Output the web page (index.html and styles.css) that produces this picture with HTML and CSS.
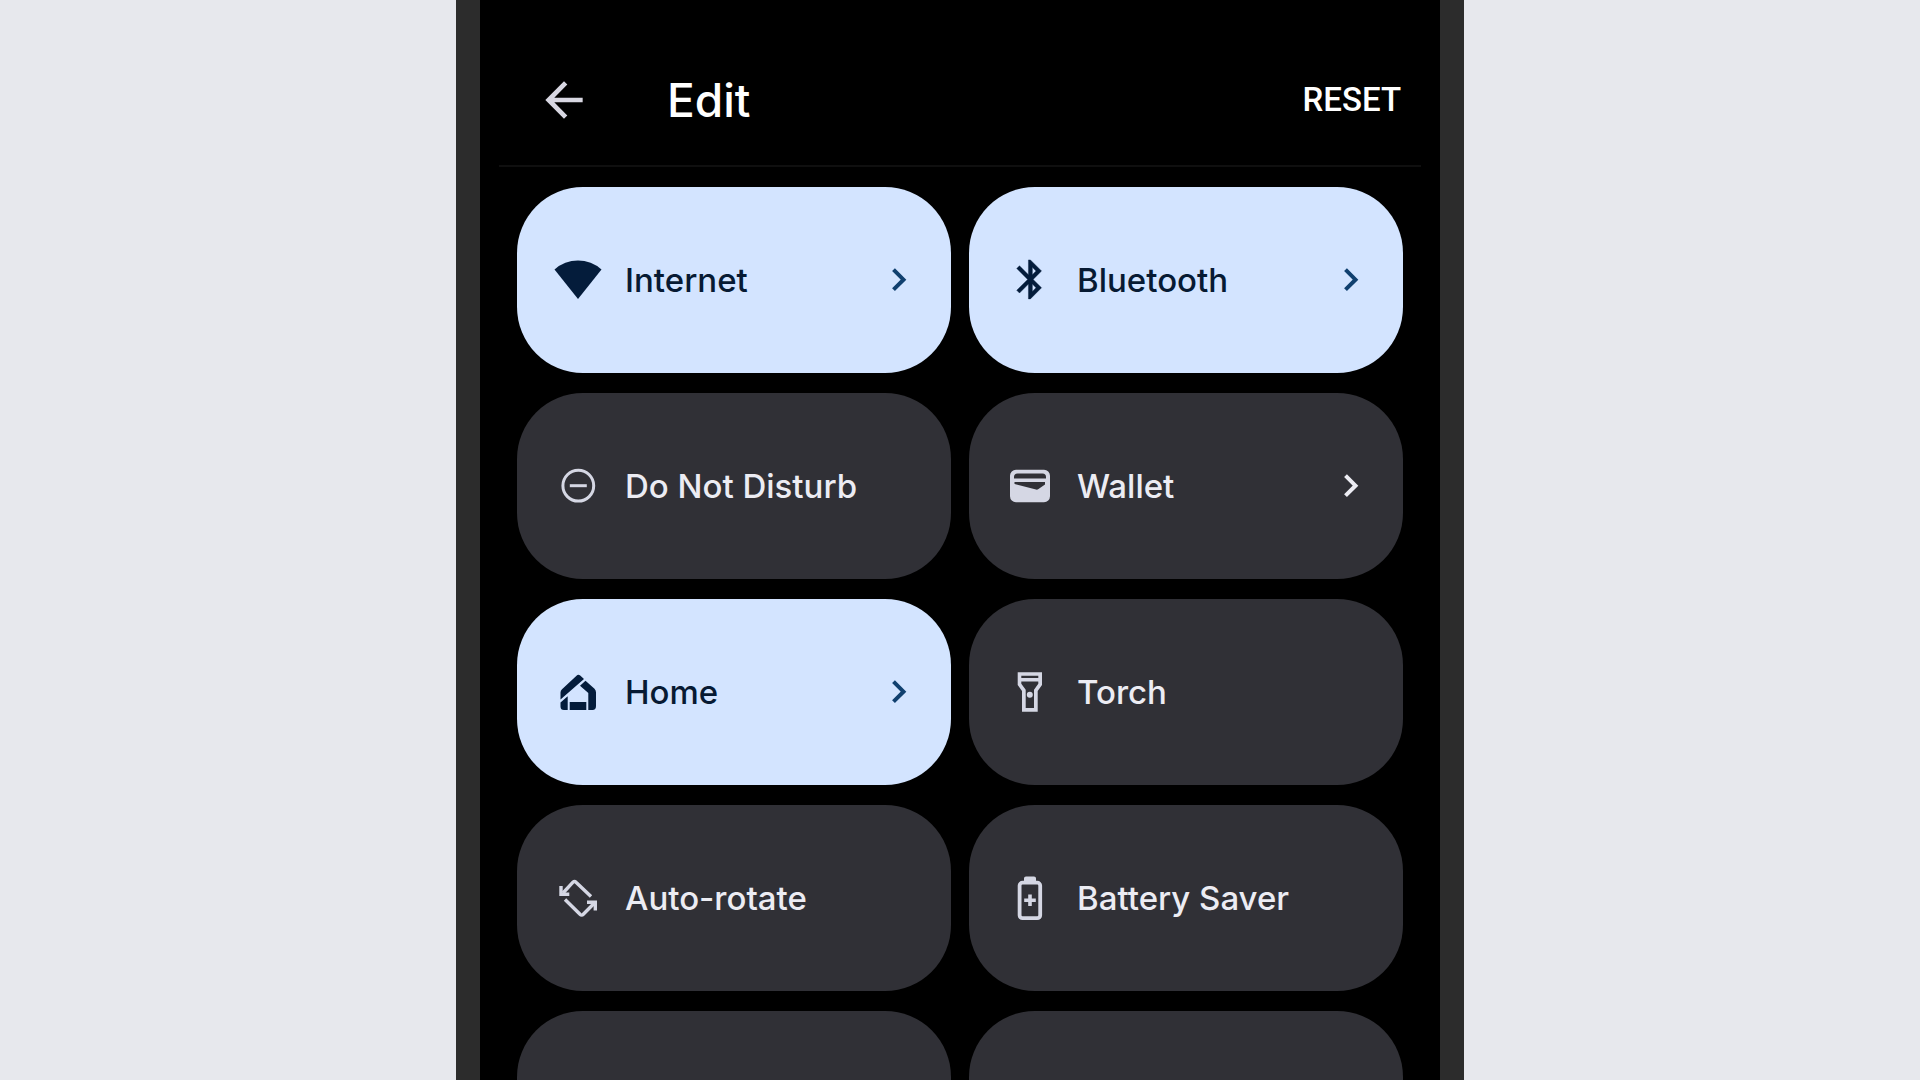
FILE: index.html
```html
<!DOCTYPE html>
<html lang="en-GB">
<head>
<meta charset="utf-8">
<meta name="viewport" content="width=device-width, initial-scale=1">
<title>Edit quick settings</title>
<link rel="stylesheet" href="styles.css">
</head>
<body>
<main class="phone">
  <header class="toolbar">
    <button class="back" type="button" aria-label="Back">
      <svg class="back-icon" viewBox="0 0 24 24" aria-hidden="true"><path d="M20 11H7.83l5.59-5.59L12 4l-8 8 8 8 1.41-1.41L7.83 13H20z"/></svg>
    </button>
    <h1 class="title">Edit</h1>
    <button class="reset" type="button">RESET</button>
  </header>
  <section class="tiles" aria-label="Tiles">
    <button class="tile tile-on" type="button">
      <svg class="icon" viewBox="0 0 48 48" aria-hidden="true"><path d="M24 43 .5 13.500A35 35 0 0 1 47.500 13.500Z"/></svg>
      <span class="label">Internet</span>
      <svg class="chevron" viewBox="0 0 16 24" aria-hidden="true"><path d="M2.500 1.700 12.500 11.700 2.500 21.700"/></svg>
    </button>
    <button class="tile tile-on" type="button">
      <svg class="icon" viewBox="0 0 48 48" aria-hidden="true"><path transform="translate(1 0) scale(1.95)" d="M17.71 7.71 12 2h-1v7.59L6.41 5 5 6.41 10.59 12 5 17.59 6.41 19 11 14.41V22h1l5.71-5.71-4.3-4.29zM13 5.83l1.88 1.88L13 9.59zm1.88 10.46L13 18.17v-3.76z" stroke="currentColor" stroke-width=".2"/></svg>
      <span class="label">Bluetooth</span>
      <svg class="chevron" viewBox="0 0 16 24" aria-hidden="true"><path d="M2.500 1.700 12.500 11.700 2.500 21.700"/></svg>
    </button>
    <button class="tile" type="button">
      <svg class="icon" viewBox="0 0 48 48" aria-hidden="true"><g fill="none" stroke="currentColor" stroke-width="3"><circle cx="24.300" cy="23.700" r="15.400"/><path d="M15.800 23.700h17"/></g></svg>
      <span class="label">Do Not Disturb</span>
    </button>
    <button class="tile" type="button">
      <svg class="icon" viewBox="0 0 48 48" aria-hidden="true"><path fill-rule="evenodd" d="M10 7.7H38a6 6 0 0 1 6 6V34.300a6 6 0 0 1-6 6H10a6 6 0 0 1-6-6V13.700a6 6 0 0 1 6-6ZM8 16.500H40V15a3.500 3.500 0 0 0-3.500-3.500H11.500A3.500 3.500 0 0 0 8 15ZM8.500 20V22L30 27.600Q31.300 28 32.500 27L39 22.500V20Z"/></svg>
      <span class="label">Wallet</span>
      <svg class="chevron" viewBox="0 0 16 24" aria-hidden="true"><path d="M2.500 1.700 12.500 11.700 2.500 21.700"/></svg>
    </button>
    <button class="tile tile-on" type="button">
      <svg class="icon" viewBox="0 0 48 48" aria-hidden="true"><path d="M6.500 24.500Q6.500 22.500 8 21.200L22.500 7.700Q24.300 6 26.200 7.600L30 11 6.500 31.500ZM31.500 12.700 40.500 20.800Q42 22.300 42 24.500V38Q42 42 38.500 42H34.300V25L26 17.800ZM6.500 34.500 13.700 28.300V42H10Q6.500 42 6.500 38.500ZM15.700 34H32.300V42H15.700Z"/></svg>
      <span class="label">Home</span>
      <svg class="chevron" viewBox="0 0 16 24" aria-hidden="true"><path d="M2.500 1.700 12.500 11.700 2.500 21.700"/></svg>
    </button>
    <button class="tile" type="button">
      <svg class="icon" viewBox="0 0 48 48" aria-hidden="true"><path fill-rule="evenodd" d="M11.700 4.300H36V17L31.700 23V43.700H16V23L11.700 17ZM15.300 7.700V10H32.300V7.700ZM15.300 13.400V15.700L19.700 21.700V40H28V21.700L32.300 15.700V13.400Z"/><circle cx="23.800" cy="26.700" r="3"/></svg>
      <span class="label">Torch</span>
    </button>
    <button class="tile" type="button">
      <svg class="icon" viewBox="0 0 48 48" aria-hidden="true"><g fill="none" stroke="currentColor" stroke-width="3.400"><path stroke-linejoin="round" d="M9 19 19 8.200Q20.500 6.700 22 8.200L37 22.500M11 25.500 26 40.300Q27.700 42 29.300 40.300L40 29.500"/><path d="M7 12V20.300H15.300M33 28.300H41.300V36.500"/></g></svg>
      <span class="label">Auto-rotate</span>
    </button>
    <button class="tile" type="button">
      <svg class="icon" viewBox="0 0 48 48" aria-hidden="true"><rect x="13.600" y="8.600" width="20.600" height="35.600" rx="3" fill="none" stroke="currentColor" stroke-width="3.800"/><path d="M18 8V4.300Q18 2.500 20 2.500H28Q30 2.500 30 4.300V8ZM22.200 20.500H25.800V24.500H29.800V28H25.800V32H22.200V28H18.200V24.500H22.200Z"/></svg>
      <span class="label">Battery Saver</span>
    </button>
    <button class="tile" type="button" aria-label="Empty tile"></button>
    <button class="tile" type="button" aria-label="Empty tile"></button>
  </section>
</main>
</body>
</html>
```
FILE: styles.css
```css
* {
  box-sizing: border-box;
}

body {
  margin: 0;
  background: #e7e8ed;
  font-family: Inter, "Open Sans", sans-serif;
}

button {
  border: 0;
  padding: 0;
  background: none;
  color: inherit;
  font: inherit;
  cursor: pointer;
}

.phone {
  width: 100%;
  max-width: 1008px;
  height: 100vh;
  margin: 0 auto;
  border: solid #2c2c2c;
  border-width: 0 24px;
  background: #000;
  color: #ececf3;
  overflow-y: auto;
  scrollbar-width: none;
}

.toolbar {
  display: flex;
  align-items: center;
  margin: 0 19px;
  padding: 64px 20px 29px 37px;
  border-bottom: 2px solid #0f0f0f;
}

.back {
  display: flex;
  color: #d8d7e2;
}

.back-icon {
  width: 56px;
  height: 56px;
  fill: currentColor;
}

.title {
  flex: 1;
  margin: 0;
  padding: 0 0 0 75px;
  color: #fff;
  font-size: 46px;
  font-weight: 500;
  line-height: 72px;
}

.reset {
  color: #fff;
  font-family: Roboto, sans-serif;
  font-size: 33px;
  font-weight: 500;
  line-height: 40px;
}

.tiles {
  display: grid;
  grid-template-columns: 1fr 1fr;
  gap: 20px 18px;
  padding: 20px 37px;
}

.tile {
  display: flex;
  align-items: center;
  gap: 23px;
  min-height: 186px;
  padding: 0 44px 0 37px;
  border-radius: 66px;
  background: #303036;
  font-size: 33px;
  font-weight: 500;
  line-height: 38px;
  text-align: left;
}

.tile-on {
  background: #d3e4ff;
  color: #071a33;
}

.icon {
  flex: none;
  width: 48px;
  height: 48px;
  fill: currentColor;
  color: #d5d7e4;
}

.tile-on .icon {
  color: #041c3b;
}

.label {
  flex: 1;
}

.chevron {
  flex: none;
  width: 16px;
  height: 24px;
  fill: none;
  stroke: currentColor;
  stroke-width: 4px;
}

.tile-on .chevron {
  color: #10406f;
}
```
